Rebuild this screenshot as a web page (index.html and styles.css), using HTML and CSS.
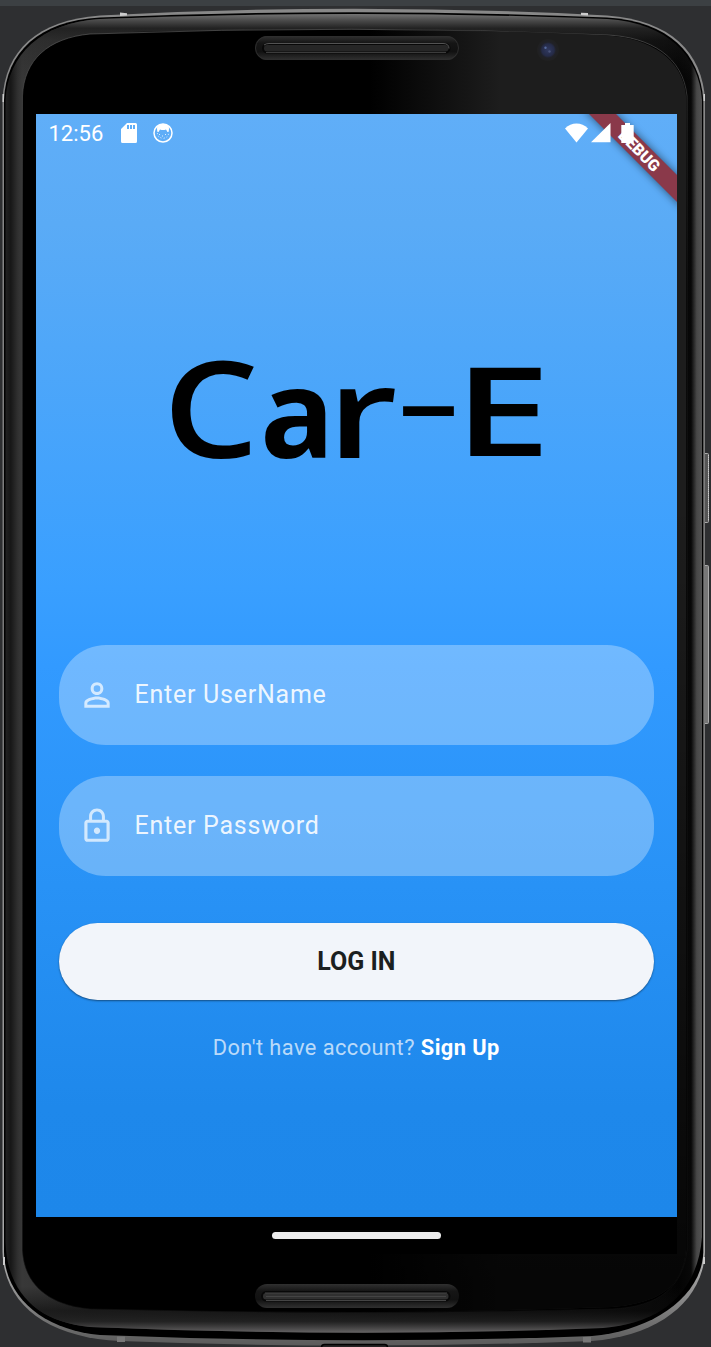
FILE: index.html
```html
<!DOCTYPE html>
<html lang="en">
<head>
<meta charset="utf-8">
<title>Car-E</title>
<link rel="stylesheet" href="styles.css">
</head>
<body>
<main class="stage">
  <svg class="device" viewBox="0 0 711 1347" aria-hidden="true">
    <defs>
      <linearGradient id="side" gradientUnits="userSpaceOnUse" x1="0" x2="711" y1="0" y2="0">
        <stop offset=".008" stop-color="#202020"/><stop offset=".015" stop-color="#171717"/><stop offset=".025" stop-color="#303030"/><stop offset=".031" stop-color="#383838"/>
        <stop offset=".12" stop-color="#303030"/><stop offset=".85" stop-color="#101010"/><stop offset=".955" stop-color="#030303"/><stop offset=".972" stop-color="#080808"/><stop offset=".98" stop-color="#484848"/><stop offset=".989" stop-color="#555"/>
      </linearGradient>
      <linearGradient id="caps" gradientUnits="userSpaceOnUse" x1="0" x2="0" y1="0" y2="1347">
        <stop offset=".01" stop-color="#777"/><stop offset=".015" stop-color="#4c4c4c"/><stop offset=".021" stop-color="#222"/><stop offset=".03" stop-color="#222" stop-opacity=".4"/><stop offset=".06" stop-color="#222" stop-opacity="0"/>
        <stop offset=".955" stop-color="#111" stop-opacity="0"/><stop offset=".973" stop-color="#0b0b0b" stop-opacity=".6"/><stop offset=".981" stop-color="#202020" stop-opacity=".8"/><stop offset=".99" stop-color="#6d6b6c"/>
      </linearGradient>
      <linearGradient id="rim" x1="0" x2="0" y1="0" y2="1"><stop offset="0" stop-color="#888"/><stop offset=".06" stop-color="#8a8a8a"/><stop offset=".5" stop-color="#777"/><stop offset=".94" stop-color="#aaa"/><stop offset="1" stop-color="#5a5a5a"/></linearGradient>
      <linearGradient id="glare" gradientUnits="userSpaceOnUse" x1="370" x2="500" y1="0" y2="0"><stop offset="0" stop-color="#1c1c1c" stop-opacity="0"/><stop offset="1" stop-color="#1d1d1d"/></linearGradient>
      <linearGradient id="fade" gradientUnits="userSpaceOnUse" x1="0" x2="0" y1="500" y2="1280"><stop offset="0" stop-opacity="0"/><stop offset="1" stop-opacity=".8"/></linearGradient>
      <linearGradient id="edge" x1="0" x2="0" y1="0" y2="1"><stop offset="0" stop-color="#666"/><stop offset=".08" stop-color="#444"/><stop offset=".2" stop-color="#222"/><stop offset="1" stop-color="#111"/></linearGradient>
      <linearGradient id="slot" x1="0" x2="0" y1="0" y2="1"><stop offset="0" stop-color="#303030"/><stop offset=".3" stop-color="#151515"/><stop offset=".65" stop-color="#111"/><stop offset="1" stop-color="#303030"/></linearGradient>
      <radialGradient id="lens"><stop offset="0" stop-color="#30395f"/><stop offset=".55" stop-color="#252b48"/><stop offset=".72" stop-color="#202127"/><stop offset="1" stop-color="#202020"/></radialGradient>
    </defs>
    <rect width="711" height="1347" fill="#2e2f31"/>
    <rect width="711" height="6" fill="#3c4043"/>
    <g stroke="#aaa">
      <rect x="704" y="453.500" width="4.500" height="69" rx="1" fill="#555"/>
      <rect x="704" y="565.500" width="4.500" height="158" rx="1" fill="#777"/>
    </g>
    <path d="M708.500 455v66" stroke="#ccc" stroke-dasharray="1 1"/>
    <path fill="url(#rim)" d="M2.500 100C4.500 51 37 20 100 15.500Q355 2 607 15.500C671 20 702.500 53 705 100V1252C703 1302 657 1336 592 1341Q355 1350 120 1341C50 1338 4 1306 2.500 1252Z"/>
    <path fill="#000" d="M4 100C6 52 39 21 100 17.500Q355 7 607 17.500C669 21 700 54 703.300 100V1252C702 1298 650 1331 592 1336Q355 1345 100 1335C44 1330 5 1298 4 1252Z"/>
    <path fill="url(#side)" d="M5.500 100C8 54 41 23 100 19Q355 9 607 19C668 23 699 56 702 100V1237C698 1290 664 1323 603 1328Q355 1338 90 1327C37 1322 7 1292 5.500 1242Z"/>
    <path fill="url(#caps)" d="M5.500 100C8 54 41 23 100 19Q355 9 607 19C668 23 699 56 702 100V1237C698 1290 664 1323 603 1328Q355 1338 90 1327C37 1322 7 1292 5.500 1242Z"/>
    <path fill="#000" stroke="url(#edge)" stroke-width=".6" d="M22.500 96C24 60 48 38 90 34Q355 24 607 35C651 37 683 57 687 96V1250C683 1286 660 1307 612 1309Q355 1316 90 1309C48 1305 24 1284 22.500 1250Z"/>
    <path fill="url(#glare)" d="M370 29.500Q500 30 607 35.500C650 38 683 59 686 96V1250C683 1286 660 1303 612 1307Q500 1311 370 1312Z"/>
    <path fill="url(#fade)" d="M370 29.500Q500 30 607 35.500C650 38 683 59 686 96V1250C683 1286 660 1303 612 1307Q500 1311 370 1312Z"/>
    <path fill="#ccc" d="M120 12.500l7 .7v2.200l-7 .5zM581 12.700l7 .3v2.500l-7-.4zM2.500 94h1.500v8H2.500zM703.500 94h1.500v7h-1.500zM3 1257h2v8H3zM703 1257h2v7h-2z"/>
    <path fill="#777" d="M117 1336.500h8v5.500h-8zM583 1337h8v5.500h-8z"/>
    <g>
      <rect x="255" y="36" width="204" height="24" rx="12" fill="url(#slot)"/>
      <rect x="255.500" y="36.500" width="203" height="23" rx="11.500" fill="none" stroke="#2e2e2e"/>
      <rect x="263" y="44" width="186.500" height="8.500" rx="4.200" fill="#262626" stroke="#080808" stroke-width="2"/>
      <path d="M264 45q2-1.500 5-1.500h174q6 0 6 5" fill="none" stroke="#5c5c5c" stroke-width=".9"/>
      <path d="M266 52.500h180" stroke="#3c3c3c"/>
      <rect x="255" y="1284" width="204" height="24" rx="12" fill="url(#slot)"/>
      <rect x="262" y="1292" width="187.500" height="8.500" rx="4.200" fill="#303030" stroke="#080808" stroke-width="2"/>
      <path d="M265 1293h182M266 1296.500h180M266 1300.500h180" stroke="#444"/>
    </g>
    <circle cx="548" cy="50" r="11" fill="url(#lens)"/>
    <circle cx="545.500" cy="47.800" r="1.200" fill="#566a9c"/><circle cx="549.500" cy="51.500" r="1.200" fill="#485279"/>
    <rect x="321.500" y="1344.500" width="66" height="8" rx="3" fill="#252324" stroke="#000" stroke-width="1.500"/>
  </svg>

  <section class="screen">
    <div class="debug">
      <svg class="debug-band" viewBox="0 0 105 105" aria-hidden="true">
        <defs><filter id="shadow" x="-20%" y="-20%" width="140%" height="140%"><feGaussianBlur stdDeviation="4"/></filter></defs>
        <path d="M11 -6L111 94V67L38 -6Z" opacity=".55" filter="url(#shadow)"/>
        <path d="M17 0L105 88V61L44 0Z" fill="#8a394a"/>
      </svg>
      <span class="debug-label">DEBUG</span>
    </div>
    <header class="status">
      <time class="clock">12:56</time>
      <svg class="sd" viewBox="0 0 16 20"><path fill="#fff" fill-rule="evenodd" d="M6 0H14.500Q16 0 16 1.500V18.500Q16 20 14.500 20H1.500Q0 20 0 18.500V6ZM6 2v4h2V2ZM9 2v4h2V2ZM12 2v4h2V2Z"/></svg>
      <svg class="cat" viewBox="0 0 20 20"><circle cx="10" cy="10" r="9" fill="none" stroke="#fff" stroke-width="1.500"/><path fill="#fff" d="M4.500 3Q10-1 15.500 3Q16.500 5 15.500 9H14.500L13 6.500Q10 7.500 7 6.500L5.500 9H4.500Q3.500 5 4.500 3Z"/><path fill="none" stroke="#fff" stroke-width=".8" stroke-dasharray="1 2" d="M4.500 10Q4 14 10 15.500Q16 14 15.500 10M6 11.500h2M12 11.500h2M9 13h2"/></svg>
      <div class="signals">
        <svg class="wifi" viewBox="0 0 23 20"><path fill="#fff" d="M0 5.500Q5 .5 11.500.5T23 5.500L11.500 19.500Z"/></svg>
        <svg class="cell" viewBox="0 0 20 20"><path fill="#fff" d="M19.500 0V19.300H0Z"/></svg>
        <svg class="battery" viewBox="0 0 13 20"><path fill="#fff" d="M4 0H9V2H12.700V20H.300V2H4Z"/></svg>
      </div>
    </header>

    <svg class="logo" viewBox="0 -20 420 220" role="img" aria-label="Car-E">
      <g class="logo-text">
        <text transform="translate(15 136) scale(1.2 1.06)">C</text>
        <text class="heavy" transform="translate(112 136) scale(.98 .99)">a</text>
        <text transform="translate(179 136) scale(1.3 1)">r</text>
        <text transform="translate(248 116) scale(1.6 .8)">-</text>
        <text transform="translate(306 133.500) scale(1.38 .975)">E</text>
      </g>
    </svg>

    <form class="form">
      <div class="field">
        <svg class="field-icon" viewBox="0 0 24 24"><path fill="currentColor" d="M12 5.900a2.100 2.100 0 1 1 0 4.200 2.100 2.100 0 0 1 0-4.200m0 9c2.970 0 6.100 1.460 6.100 2.100v1.100H5.900V17c0-.64 3.130-2.100 6.100-2.100M12 4C9.790 4 8 5.790 8 8s1.790 4 4 4 4-1.790 4-4-1.790-4-4-4zm0 9c-2.670 0-8 1.340-8 4v3h16v-3c0-2.660-5.330-4-8-4z"/></svg>
        <span>Enter UserName</span>
      </div>
      <div class="field">
        <svg class="field-icon" viewBox="0 0 24 24"><path fill="currentColor" d="M12 17c1.100 0 2-.9 2-2s-.9-2-2-2-2 .9-2 2 .9 2 2 2zm6-9h-1V6c0-2.760-2.240-5-5-5S7 3.240 7 6v2H6c-1.100 0-2 .9-2 2v10c0 1.100.9 2 2 2h12c1.100 0 2-.9 2-2V10c0-1.100-.9-2-2-2zM8.900 6c0-1.710 1.390-3.100 3.100-3.100s3.100 1.390 3.100 3.100v2H8.900V6zM18 20H6V10h12v10z"/></svg>
        <span>Enter Password</span>
      </div>
      <button class="login" type="button">LOG IN</button>
      <p class="signup"><span class="ask">Don't have account?</span> <b>Sign Up</b></p>
    </form>
    <footer class="nav"><span class="handle"></span></footer>
  </section>
</main>
</body>
</html>
```
FILE: styles.css
```css
* { box-sizing: border-box; }
body { margin: 0; background: #2e2f31; font-family: Roboto, sans-serif; }
.stage { display: grid; width: 711px; height: 1347px; overflow: hidden; }
.device, .screen { grid-area: 1 / 1; }
.device { width: 711px; height: 1347px; display: block; }
.screen {
  position: relative;
  display: flex;
  flex-direction: column;
  width: 641px;
  height: 1140px;
  margin: 114px 0 0 36px;
  background: linear-gradient(#60aef8 0, #5aabf6 10%, #399fff 43%, #329aff 50%, #2892f6 70%, #1e88eb 90%, #1d87ea 100%) top / 100% 1103px no-repeat #000;
}
.debug { position: absolute; top: 0; right: 0; width: 105px; height: 105px; overflow: hidden; }
.debug-band { display: block; width: 105px; height: 105px; }
.debug-label {
  position: absolute; left: 37px; top: 27px; width: 60px;
  font-size: 16px; font-weight: 900; line-height: 20px; text-align: center; color: #fff;
  transform: rotate(45deg);
}
.status { position: relative; display: flex; align-items: center; height: 38px; padding: 0 43px 0 12.5px; }
.clock { width: 72.500px; font-size: 22px; line-height: 26px; color: #fff; padding-top: 1px; }
.sd { width: 16px; height: 20px; }
.cat { width: 20px; height: 20px; margin-left: 16px; }
.signals { display: flex; align-items: center; margin-left: auto; }
.wifi { width: 23px; height: 20px; margin-right: 3px; }
.cell { width: 20px; height: 20px; margin-right: 10px; }
.battery { width: 13px; height: 20px; }
.logo { flex: none; width: 420px; height: 220px; margin: 150px 0 0 112px; }
.logo-text { font-family: "Open Sans", sans-serif; font-size: 126px; font-weight: 600; fill: #000; filter: blur(.7px); }
.heavy { font-weight: 700; }
.form { display: flex; flex-direction: column; padding: 123px 23.5px 0 23px; }
.field {
  display: flex; align-items: center; gap: 18.5px; height: 99.5px; margin-bottom: 31.5px; padding-left: 19px;
  border-radius: 47px; background: rgba(255, 255, 255, .3);
  color: rgba(255, 255, 255, .9); font-size: 25px; letter-spacing: .75px;
}
.field-icon { width: 38px; height: 38px; color: rgba(255, 255, 255, .7); }
.login {
  height: 77.5px; margin: 15.5px 0 0; border: 0; border-radius: 39px; background: #f2f5fa;
  box-shadow: 0 1px 2px rgba(0, 0, 0, .45);
  color: #1b1f20; font: 700 25px Roboto, sans-serif; text-align: center;
}
.signup { margin: 34px 0 0; font-size: 21.800px; line-height: 28px; letter-spacing: .45px; text-align: center; color: #fff; white-space: nowrap; }
.ask { color: rgba(255, 255, 255, .7); }
.nav { display: flex; align-items: center; justify-content: center; height: 37px; margin-top: auto; }
.handle { width: 169px; height: 6.500px; border-radius: 4px; background: #ececec; }
```
